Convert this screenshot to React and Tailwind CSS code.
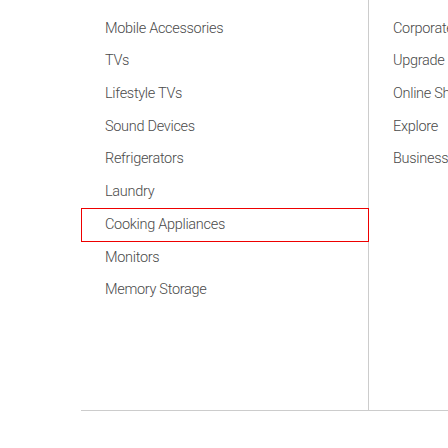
export default function App() {
  const left = [
    "Smart Watch",
    "Mobile Accessories",
    "TVs",
    "Lifestyle TVs",
    "Sound Devices",
    "Refrigerators",
    "Laundry",
    "Cooking Appliances",
    "Monitors",
    "Memory Storage",
  ];
  const right = [
    "Student Offers",
    "Corporate Employee Program",
    "Upgrade Program",
    "Online Shop Exclusives",
    "Explore",
    "Business",
  ];
  return (
    <div className="w-[448px] h-[448px] overflow-hidden bg-white text-[#4a4a4a] text-[14.5px] font-light tracking-[-0.3px] font-['Roboto',_'Liberation_Sans',_sans-serif]">
      <div className="ml-[81px] -mt-[20.5px] flex border-b border-[#ccc] h-[431.5px]">
        <ul className="w-[288px] shrink-0 border-r border-[#ccc] flex flex-col">
          {left.map((t) =>
            t === "Cooking Appliances" ? (
              <li
                key={t}
                className="relative z-10 -mr-px h-[34px] -my-[0.65px] border border-[#e00] pl-[23px] flex items-center whitespace-nowrap"
              >
                {t}
              </li>
            ) : (
              <li key={t} className="h-[32.7px] pl-[24px] flex items-center whitespace-nowrap">
                {t}
              </li>
            )
          )}
        </ul>
        <ul className="flex flex-col">
          {right.map((t) => (
            <li key={t} className="h-[32.7px] pl-[24px] flex items-center whitespace-nowrap">
              {t}
            </li>
          ))}
        </ul>
      </div>
    </div>
  );
}
